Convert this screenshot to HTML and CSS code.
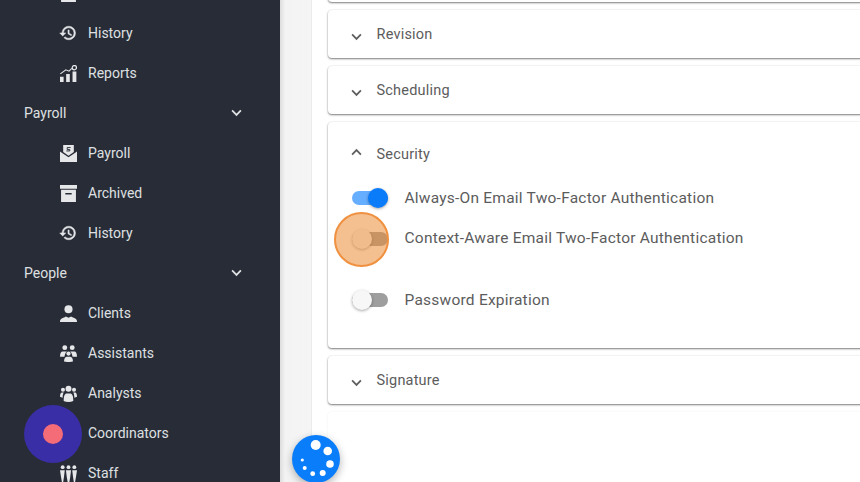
FILE: index.html
```html
<!DOCTYPE html>
<html lang="en">
<head>
<meta charset="utf-8">
<title>Settings</title>
<link rel="stylesheet" href="styles.css">
</head>
<body>
<svg class="defs" width="0" height="0" aria-hidden="true">
  <symbol id="i-history" viewBox="0 0 24 24"><path d="M13 3a9 9 0 0 0-9 9H1l3.89 3.89.07.14L9 12H6c0-3.87 3.13-7 7-7s7 3.13 7 7-3.13 7-7 7c-1.93 0-3.68-.79-4.94-2.06l-1.42 1.42A8.954 8.954 0 0 0 13 21a9 9 0 0 0 0-18zm-1 5v5l4.28 2.54.72-1.21-3.5-2.08V8H12z" stroke="currentColor" stroke-width=".7"/></symbol>
  <symbol id="i-reports" viewBox="0 0 16 16"><path d="M0 11h3.400v5H0zM5.800 8.500h3.400V16H5.800zM11.800 6.200h3.600V16h-3.600z"/><path d="M.3 8.300 5.500 4.500l3 1.300 2.600-2.700" fill="none" stroke="currentColor" stroke-width="1"/><circle cx="13.500" cy="2.500" r="2" fill="none" stroke="currentColor" stroke-width="1.200"/></symbol>
  <symbol id="i-archive" viewBox="0 0 16 16"><path d="M0 0h16v3.500H0zM1 4.500h14V16H1zM5 7.500v1.500h6V7.500z" fill-rule="evenodd"/></symbol>
  <symbol id="i-client" viewBox="0 0 16 16"><circle cx="8" cy="4" r="3.800"/><path d="M0 16c0-1 .1-2.300 1.300-3 1.600-1 3.600-1.700 4.200-2.100L8 12l2.500-1.100c.7.400 2.600 1.100 4.200 2.100 1.200.7 1.300 2 1.300 3z"/></symbol>
  <symbol id="i-assist" viewBox="0 0 16 16"><circle cx="4.500" cy="2.500" r="2.300"/><circle cx="11.500" cy="2.500" r="2.300"/><path d="M0 11c0-3.500 1-5 2.500-5h4C5 7 4.500 9 4.200 11zM16 11c0-3.500-1-5-2.500-5h-4c1.500 1 2 3 2.300 5z"/><circle cx="8" cy="8" r="2"/><path d="M3.800 15.500c0-3 1.200-4.500 2.700-4.500h3c1.500 0 2.700 1.500 2.700 4.500C10 16.200 6 16.200 3.800 15.500z"/></symbol>
  <symbol id="i-analyst" viewBox="0 0 16 16"><circle cx="8" cy="3.500" r="2.800"/><circle cx="2.800" cy="4.500" r="1.900"/><circle cx="13.200" cy="4.500" r="1.900"/><path d="M3.500 15c0-5 1-7 3-7h3c2 0 3 2 3 7-2.500 1.200-6.500 1.200-9 0zM0 11c0-2.500.5-4 2-4h1.500C2.800 8 2.500 10 2.500 12zM16 11c0-2.500-.5-4-2-4h-1.500c.7 1 1 3 1 5z"/></symbol>
  <symbol id="i-staff" viewBox="0 0 16 16"><circle cx="2.500" cy="2" r="1.800"/><circle cx="8" cy="2" r="1.800"/><circle cx="13.500" cy="2" r="1.800"/><path d="M0 5h4.500l-.8 6.500-.7 4.500H1.800L1 11.500zM5.600 5h4.800l-.8 6.500-.8 4.500H7.200l-.8-4.500zM11.500 5H16l-1 6.500-.8 4.500H13l-.7-4.500z"/></symbol>
  <symbol id="i-down" viewBox="0 0 12 8"><path d="M1.200 1.200 6 6l4.800-4.800" fill="none" stroke="currentColor" stroke-width="2"/></symbol>
  <symbol id="i-up" viewBox="0 0 12 8"><path d="M1.200 6.800 6 2l4.800 4.800" fill="none" stroke="currentColor" stroke-width="2"/></symbol>
</svg>

<div class="app">
  <nav class="sidebar">
    <ul class="nav">
      <li class="item"><svg class="icon"><use href="#i-archive"/></svg></li>
      <li class="item"><svg class="icon icon-hist"><use href="#i-history"/></svg><span>History</span></li>
      <li class="item"><svg class="icon"><use href="#i-reports"/></svg><span>Reports</span></li>
      <li class="section"><span>Payroll</span><svg class="nav-chevron"><use href="#i-down"/></svg></li>
      <li class="item"><svg class="icon" viewBox="0 0 16 16"><path d="M3 0h10v6.500L8 10 3 6.500zM0 6l2 1.500L8 11.500l6-4L16 6v10H0z"/><path class="dollar" d="M6 5.600h3.200V4.300H6.800V2.400H10"/></svg><span>Payroll</span></li>
      <li class="item"><svg class="icon"><use href="#i-archive"/></svg><span>Archived</span></li>
      <li class="item"><svg class="icon icon-hist"><use href="#i-history"/></svg><span>History</span></li>
      <li class="section"><span>People</span><svg class="nav-chevron"><use href="#i-down"/></svg></li>
      <li class="item"><svg class="icon"><use href="#i-client"/></svg><span>Clients</span></li>
      <li class="item"><svg class="icon"><use href="#i-assist"/></svg><span>Assistants</span></li>
      <li class="item"><svg class="icon"><use href="#i-analyst"/></svg><span>Analysts</span></li>
      <li class="item"><svg class="icon"><use href="#i-analyst"/></svg><span>Coordinators</span></li>
      <li class="item"><svg class="icon"><use href="#i-staff"/></svg><span>Staff</span></li>
    </ul>
  </nav>

  <div class="gutter"></div>

  <main class="content">
    <section class="card card-stub"></section>
    <section class="card">
      <header class="card-head"><svg class="chevron"><use href="#i-down"/></svg><span>Revision</span></header>
    </section>
    <section class="card">
      <header class="card-head"><svg class="chevron"><use href="#i-down"/></svg><span>Scheduling</span></header>
    </section>
    <section class="card card-open">
      <header class="card-head"><svg class="chevron chevron-up"><use href="#i-up"/></svg><span>Security</span></header>
      <div class="setting"><span class="toggle toggle-on"></span><span>Always-On Email Two-Factor Authentication</span></div>
      <div class="setting"><span class="toggle toggle-low"></span><span>Context-Aware Email Two-Factor Authentication</span></div>
      <div class="setting setting-last"><span class="toggle"></span><span>Password Expiration</span></div>
    </section>
    <section class="card">
      <header class="card-head"><svg class="chevron"><use href="#i-down"/></svg><span>Signature</span></header>
    </section>
    <section class="card card-tail"></section>
  </main>
</div>

<div class="spot"></div>
<div class="recorder"><span class="recorder-dot"></span></div>
<div class="fab">
  <svg class="fab-dots" viewBox="0 0 48 48" width="48" height="48">
    <circle cx="23.700" cy="10" r="5"/><circle cx="35.700" cy="16" r="4.300"/><circle cx="38" cy="29" r="3.800"/><circle cx="30.700" cy="38" r="3"/><circle cx="20.700" cy="38.700" r="2.400"/><circle cx="12.700" cy="33" r="2"/><circle cx="10.300" cy="25" r="1.600"/>
  </svg>
</div>
</body>
</html>
```

FILE: styles.css
```css
* { box-sizing: border-box; }
html, body { margin: 0; height: 100%; overflow: hidden; }
body { font-family: Roboto, "Liberation Sans", sans-serif; background: #fff; }
.defs { position: absolute; }

.app { display: flex; height: 482px; overflow: hidden; }

.sidebar { flex: 0 0 280px; background: #282c37; color: #dfe0e2; overflow: hidden; }
.nav { list-style: none; margin: -27px 0 0; padding: 0; font-size: 14px; }
.item, .section { display: flex; align-items: center; height: 40px; }
.item { padding-left: 60px; }
.section { padding-left: 24px; }
.icon { flex: none; width: 17px; height: 17px; margin: 0 11.500px 0 -.5px; fill: currentColor; color: #e6e7e9; }
.icon-hist { width: 18px; height: 18px; margin: 0 11px 0 -1px; }
.dollar { fill: none; stroke: #282c37; stroke-width: .9; }
.nav-chevron { width: 11px; height: 8px; margin-left: auto; margin-right: 38px; color: #dfe0e2; }
.section span { flex: none; }

.gutter { flex: 0 0 32px; background: linear-gradient(90deg, #dcdcdc 0, #f3f3f3 5px, #f5f5f5 100%); border-right: 1px solid #ececec; }

.content { flex: none; width: 600px; margin-top: -46px; padding-left: 16px; display: flex; flex-direction: column; gap: 8px; background: #fff; }

.card { flex: none; width: 560px; height: 48px; background: #fff; border-radius: 4px; box-shadow: 0 1px 2px rgba(0,0,0,.5), 0 0 2px rgba(0,0,0,.08); color: #5c5c5c; font-size: 14.500px; }
.card-open { height: 226px; padding-top: 8px; }
.card-tail { height: 120px; box-shadow: 0 0 2px rgba(0,0,0,.08); }
.card-head { display: flex; align-items: center; height: 48px; padding-left: 23px; letter-spacing: .2px; }
.chevron { flex: none; width: 11px; height: 8px; margin: 5px 14.500px 0 0; color: #5f5f5f; }
.chevron-up { margin-top: -4px; }

.setting { display: flex; align-items: center; height: 40px; padding-left: 24px; font-size: 15.500px; letter-spacing: .23px; }
.setting-last { margin-top: 22px; }
.toggle { position: relative; flex: none; width: 36px; height: 14px; margin-right: 16.500px; border-radius: 7px; background: #9e9e9e; }
.toggle::after { content: ""; position: absolute; left: 0; top: -3px; width: 20px; height: 20px; border-radius: 50%; background: #f7f7f7; box-shadow: 0 1px 3px rgba(0,0,0,.35); }
.toggle-on { background: #66aeff; }
.toggle-on::after { left: 16px; background: #0a7cfa; }
.toggle-low { top: 1px; }

.spot { position: absolute; left: 334px; top: 212px; width: 55px; height: 55px; border-radius: 50%; border: 2px solid #ef9140; background: rgba(236,140,53,.55); }
.recorder { position: absolute; left: 24px; top: 405px; width: 58px; height: 58px; border-radius: 50%; background: #3a2ea6; display: flex; align-items: center; justify-content: center; }
.recorder-dot { width: 20px; height: 20px; border-radius: 50%; background: #f56c79; }
.fab { position: absolute; left: 292px; top: 435px; width: 48px; height: 48px; border-radius: 50%; background: #0a7dfb; box-shadow: 0 3px 8px rgba(0,0,0,.3); }
.fab-dots { display: block; fill: #fff; }
```
